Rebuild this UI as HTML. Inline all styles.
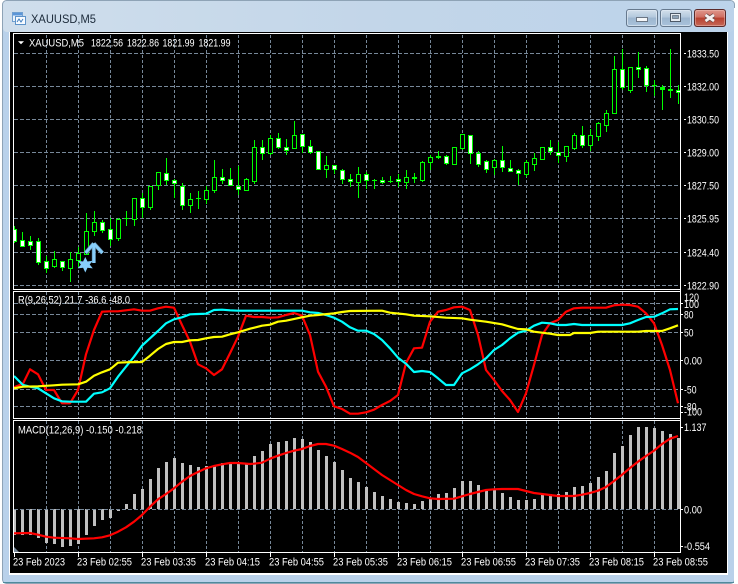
<!DOCTYPE html>
<html><head><meta charset="utf-8"><title>XAUUSD,M5</title>
<style>
html,body{margin:0;padding:0;background:#fff;width:738px;height:584px;overflow:hidden}
svg{display:block}
text{font-family:"Liberation Sans",sans-serif;fill:#fff;font-size:10.6px}
</style></head><body>
<svg width="738" height="584" viewBox="0 0 738 584" xmlns="http://www.w3.org/2000/svg">
<defs>
<linearGradient id="tb" x1="0" y1="0" x2="1" y2="0"><stop offset="0" stop-color="#cfdeec"/><stop offset=".5" stop-color="#c3d6e9"/><stop offset="1" stop-color="#bcd3ea"/></linearGradient>
<linearGradient id="bt" x1="0" y1="0" x2="0" y2="1"><stop offset="0" stop-color="#d5e1ed"/><stop offset=".45" stop-color="#b3c8dc"/><stop offset=".5" stop-color="#9db6cf"/><stop offset="1" stop-color="#a9c3dc"/></linearGradient>
<linearGradient id="cl" x1="0" y1="0" x2="0" y2="1"><stop offset="0" stop-color="#e0998e"/><stop offset=".45" stop-color="#cf6f62"/><stop offset=".5" stop-color="#b8402f"/><stop offset="1" stop-color="#c66a58"/></linearGradient>
<clipPath id="m"><rect x="14" y="35" width="666" height="254"/></clipPath>
<clipPath id="r"><rect x="14" y="292" width="666" height="126"/></clipPath>
<clipPath id="c"><rect x="14" y="421" width="666" height="131"/></clipPath>
</defs>

<!-- window frame -->
<rect x="2.500" y="0.500" width="732" height="583" rx="4" fill="#b9d1ea" stroke="#8ea3b6"/>
<rect x="3" y="1" width="731" height="31" rx="4" fill="url(#tb)"/>
<rect x="734" y="8" width="4" height="576" fill="#fff"/>
<rect x="3" y="582" width="731" height="1" fill="#4f8a9c"/>

<!-- title icon -->
<rect x="12.500" y="12.500" width="10" height="9" fill="#eaf3fb" stroke="#6f9fd0"/>
<rect x="13" y="13" width="9" height="2.500" fill="#5b96d8"/>
<rect x="15.500" y="16.500" width="10" height="8" fill="#f7fbff" stroke="#5d93c9"/>
<path d="M17 22l2-3 2 3 2-3" fill="none" stroke="#3f7fc0"/>
<text x="31" y="23" style="font-size:11.6px;fill:#1b2a3a" textLength="65" lengthAdjust="spacingAndGlyphs">XAUUSD,M5</text>

<!-- buttons -->
<rect x="626.500" y="9.500" width="31" height="17" rx="2.500" fill="url(#bt)" stroke="#66798e"/>
<rect x="627.500" y="10.500" width="29" height="15" rx="2" fill="none" stroke="#dfe9f3" stroke-opacity=".7"/>
<rect x="636.500" y="17.500" width="11" height="4" fill="#f5f7f9" stroke="#6b7684"/>
<rect x="660.500" y="9.500" width="31" height="17" rx="2.500" fill="url(#bt)" stroke="#66798e"/>
<rect x="661.500" y="10.500" width="29" height="15" rx="2" fill="none" stroke="#dfe9f3" stroke-opacity=".7"/>
<rect x="670.500" y="13.500" width="10" height="8" fill="#e6ecf2" stroke="#4e5a68"/>
<rect x="672.500" y="15.500" width="6" height="3" fill="#8fa3b7" stroke="#4e5a68" stroke-width=".6"/>
<rect x="694.500" y="9.500" width="31" height="17" rx="2.500" fill="url(#cl)" stroke="#5b2a2a"/>
<rect x="695.500" y="10.500" width="29" height="15" rx="2" fill="none" stroke="#eec0b8" stroke-opacity=".5"/>
<path d="M705.500 15l8.500 6M714 15l-8.500 6" stroke="#6d4a48" stroke-width="4.400" fill="none"/>
<path d="M705.500 15l8.500 6M714 15l-8.500 6" stroke="#f4f1f0" stroke-width="2.800" fill="none"/>

<!-- chart bg -->
<rect x="9" y="32" width="719" height="543" fill="#fff"/>
<rect x="10" y="32" width="717" height="541" fill="#000"/>

<!-- grid -->
<g shape-rendering="crispEdges" stroke="#778899" fill="none">
<path stroke-dasharray="4 2" d="M14 53.500H680M14 86.500H680M14 119.500H680M14 152.500H680M14 185.500H680M14 218.500H680M14 252.500H680M14 285.500H680M14 303.500H680M14 314.500H680M14 332.500H680M14 360.500H680M14 389.500H680M14 406.500H680"/>
<path stroke-dasharray="3 2" d="M46.500 35V289M78.500 35V289M110.500 35V289M142.500 35V289M174.500 35V289M206.500 35V289M238.500 35V289M270.500 35V289M302.500 35V289M334.500 35V289M366.500 35V289M398.500 35V289M430.500 35V289M462.500 35V289M494.500 35V289M526.500 35V289M558.500 35V289M590.500 35V289M622.500 35V289M654.500 35V289"/>
<path stroke-dasharray="3 2" d="M46.500 292V418M78.500 292V418M110.500 292V418M142.500 292V418M174.500 292V418M206.500 292V418M238.500 292V418M270.500 292V418M302.500 292V418M334.500 292V418M366.500 292V418M398.500 292V418M430.500 292V418M462.500 292V418M494.500 292V418M526.500 292V418M558.500 292V418M590.500 292V418M622.500 292V418M654.500 292V418"/>
<path stroke-dasharray="3 2" d="M46.500 421V552M78.500 421V552M110.500 421V552M142.500 421V552M174.500 421V552M206.500 421V552M238.500 421V552M270.500 421V552M302.500 421V552M334.500 421V552M366.500 421V552M398.500 421V552M430.500 421V552M462.500 421V552M494.500 421V552M526.500 421V552M558.500 421V552M590.500 421V552M622.500 421V552M654.500 421V552"/>
</g>

<!-- candles -->
<g clip-path="url(#m)" shape-rendering="crispEdges">
<path fill="none" stroke="#0f0" d="M14.500 226V243M22.500 232V246M30.500 236V250M38.500 238V265M46.500 256V273M54.500 251V268M62.500 261V271M70.500 252V282M78.500 247V267M86.500 213V254M94.500 211V236M102.500 220V233M110.500 218V246M118.500 218V241M126.500 211V226M134.500 198V226M142.500 193V218M150.500 186V210M158.500 172V190M166.500 158V185M174.500 179V198M182.500 183V210M190.500 193V213M198.500 191V209M206.500 186V204M214.500 160V193M222.500 169V184M230.500 168V186M238.500 166V195M246.500 178V191M254.500 140V184M262.500 140V160M270.500 135V155M278.500 133V149M286.500 139V155M294.500 121V148M302.500 134V153M310.500 140V154M318.500 151V169M326.500 156V178M334.500 165V174M342.500 169V184M350.500 174V187M358.500 167V198M366.500 172V189M374.500 179V189M382.500 177V184M390.500 176V183M398.500 174V187M406.500 170V189M414.500 173V183M422.500 161V182M430.500 155V170M438.500 151V159M446.500 155V165M454.500 147V164M462.500 134V150M470.500 135V164M478.500 151V167M486.500 160V173M494.500 159V175M502.500 146V172M510.500 160V172M518.500 169V185M526.500 160V177M534.500 153V171M542.500 147V160M550.500 140V155M558.500 142V163M566.500 146V162M574.500 133V150M582.500 126V148M590.500 129V151M598.500 122V141M606.500 110V132M614.500 56V113M622.500 49V90M630.500 67V93M638.500 52V78M646.500 66V92M654.500 80V96M662.500 85V110M670.500 49V98M678.500 85V104M124 218.500h5M196 198.500h5M372 180.500h5M388 181.500h5M652 85.500h5"/>
<path fill="#0f0" d="M412 177h5v2h-5zM436 156h5v2h-5zM660 87h5v3h-5zM668 89h5v2h-5z"/>
<path fill="#000" stroke="#0f0" d="M52.500 259.500h4v7h-4zM68.500 259.500h4v9h-4zM76.500 253.500h4v7h-4zM84.500 231.500h4v23h-4zM92.500 222.500h4v9h-4zM116.500 219.500h4v19h-4zM132.500 198.500h4v21h-4zM148.500 186.500h4v21h-4zM156.500 172.500h4v13h-4zM188.500 199.500h4v6h-4zM204.500 190.500h4v9h-4zM212.500 177.500h4v13h-4zM244.500 179.500h4v11h-4zM252.500 147.500h4v34h-4zM268.500 138.500h4v15h-4zM292.500 135.500h4v13h-4zM324.500 165.500h4v4h-4zM356.500 174.500h4v8h-4zM404.500 177.500h4v5h-4zM420.500 162.500h4v18h-4zM428.500 157.500h4v5h-4zM452.500 147.500h4v17h-4zM460.500 134.500h4v14h-4zM492.500 160.500h4v7h-4zM524.500 162.500h4v12h-4zM532.500 158.500h4v6h-4zM540.500 147.500h4v12h-4zM564.500 146.500h4v10h-4zM572.500 135.500h4v13h-4zM588.500 135.500h4v10h-4zM596.500 123.500h4v13h-4zM604.500 113.500h4v12h-4zM612.500 69.500h4v44h-4zM628.500 67.500h4v23h-4z"/>
<path fill="#fff" stroke="#0f0" d="M12.500 229.500h4v12h-4zM20.500 240.500h4v6h-4zM28.500 241.500h4v4h-4zM36.500 241.500h4v21h-4zM44.500 261.500h4v7h-4zM60.500 261.500h4v6h-4zM100.500 222.500h4v8h-4zM108.500 229.500h4v10h-4zM140.500 198.500h4v9h-4zM164.500 173.500h4v7h-4zM172.500 180.500h4v3h-4zM180.500 186.500h4v19h-4zM220.500 177.500h4v3h-4zM228.500 179.500h4v6h-4zM236.500 186.500h4v3h-4zM260.500 147.500h4v6h-4zM276.500 138.500h4v9h-4zM284.500 147.500h4v3h-4zM300.500 134.500h4v12h-4zM308.500 146.500h4v6h-4zM316.500 151.500h4v18h-4zM332.500 165.500h4v4h-4zM340.500 170.500h4v9h-4zM348.500 179.500h4v2h-4zM364.500 174.500h4v6h-4zM380.500 180.500h4v2h-4zM396.500 179.500h4v2h-4zM444.500 156.500h4v7h-4zM468.500 135.500h4v18h-4zM476.500 153.500h4v11h-4zM484.500 161.500h4v8h-4zM500.500 160.500h4v7h-4zM508.500 168.500h4v3h-4zM516.500 170.500h4v3h-4zM548.500 147.500h4v4h-4zM556.500 152.500h4v3h-4zM580.500 135.500h4v10h-4zM620.500 69.500h4v18h-4zM636.500 67.500h4v2h-4zM644.500 68.500h4v17h-4zM676.500 90.500h4v2h-4z"/>
</g>

<!-- arrow and star -->
<path d="M93.800 243.500 85.500 253M93.800 243.500 102.500 253M93.800 244V263" fill="none" stroke="#5f87a3" stroke-width="4"/>
<path d="M93.800 243.500 85.500 253M93.800 243.500 102.500 253M93.800 244V263" fill="none" stroke="#87cefa" stroke-width="2.800"/>
<path d="M85.300 257l2.200 4.500 5.300-.7-3.100 3.700 3.100 3.900-5.300-.7-2.200 4.800-2.200-4.800-5.300.7 3.100-3.900-3.100-3.700 5.300.7z" fill="#87cefa"/>

<!-- panel lines -->
<g clip-path="url(#r)" fill="none" stroke-width="2.200" stroke-linejoin="round">
<polyline stroke="#f00" points="14,387.300 23,383.700 30,369.300 38,374.300 46,390 54,390 62,403.300 70,403.300 78,390 86,354.300 94,330 102,311.700 110,311.300 118,311.300 126,310.300 134,309.300 142,310.700 150,310.700 158,308.300 166,306.700 174,307.700 182,325 190,341.700 198,364.300 206,368.300 214,375 222,369.300 230,353.300 238,336.700 246,315.700 254,317 262,317 270,317.700 278,317.300 286,315 294,313 302,315.700 310,335 318,371.700 326,386.700 334,406.300 342,409 350,413.700 358,413.700 366,412.300 374,409.700 382,405 390,401 398,395 406,363 414,348.300 422,347.700 430,321.700 438,311.700 446,310 454,307.300 462,306.700 470,310 478,335 486,370 494,380 502,391 510,400 518,412 526,393.300 534,365 542,335 550,323.300 558,320 566,311.700 574,308.300 582,307.700 590,307.700 598,307.700 606,307.700 614,305.300 622,304.700 630,305 638,306.700 646,313.300 654,323.300 662,345 670,370 678,403.300"/>
<polyline stroke="#0ff" points="14,376 23,385 30,386.700 38,388.300 46,393.300 54,398.300 62,401.300 70,401.700 78,401.700 86,401.700 94,393.700 102,392.300 110,388.300 118,376.700 126,366.700 134,356.700 142,345.700 150,338.300 158,331 166,323.300 174,319.300 182,317.300 190,314.300 198,314 206,313.700 214,310 222,309.700 230,310.300 238,310.700 246,310.700 254,310.700 302,310.700 310,312.300 318,313 326,315 334,317.700 342,321.700 350,327.300 358,330.700 366,330.700 374,334 382,340 390,348.300 398,357.700 406,363.700 414,372 422,371 430,372 438,378.300 446,385 454,385 462,373.300 470,369.300 478,364.300 486,358.300 494,350 502,345 510,338.300 518,332.700 526,330.700 534,325.700 542,322.700 550,323.300 558,325 566,325 574,324 582,325 590,325 622,325 630,323.300 638,320 646,317 654,316.700 662,313.300 670,309.300 678,309"/>
<polyline stroke="#ff0" points="14,388.300 23,386.700 38,386.300 54,385.300 62,384.700 78,384.300 86,381.700 94,375.700 102,372.300 110,369.300 118,362.700 126,362.300 142,362 150,355.700 158,349 166,344 174,342 182,342 190,340.300 198,340 206,338.300 214,337 222,336.700 230,334.300 238,332.300 250,328.700 262,325.700 270,324.700 278,321.700 286,320.700 302,317.300 310,315.700 318,315 334,313.300 342,312 350,311 382,310.700 390,312.700 406,314.300 414,315.700 430,316.300 446,317.700 462,318.300 470,319.700 486,321.700 502,324.300 510,326.700 518,329 526,329.300 534,331.700 542,332.700 550,333.700 558,335 570,335 574,333 590,333 598,331.700 638,331.700 646,331 662,331 670,328.300 678,325.300"/>
</g>

<!-- MACD -->
<g clip-path="url(#c)">
<path fill="none" stroke="#c0c0c0" stroke-width="3" shape-rendering="crispEdges" d="M14.500 509V535M22.500 509V535M30.500 509V535M38.500 509V538M46.500 509V543M54.500 509V544M62.500 509V547M70.500 509V546M78.500 509V544M86.500 509V535M94.500 509V526M102.500 509V520M110.500 509V518M118.500 509V511M126.500 509V504M134.500 509V494M142.500 509V489M150.500 509V479M158.500 509V468M166.500 509V462M174.500 509V458M182.500 509V463M190.500 509V465M198.500 509V467M206.500 509V466M214.500 509V466M222.500 509V463M230.500 509V462M238.500 509V464M246.500 509V464M254.500 509V456M262.500 509V451M270.500 509V444M278.500 509V442M286.500 509V441M294.500 509V438M302.500 509V439M310.500 509V442M318.500 509V450M326.500 509V456M334.500 509V462M342.500 509V470M350.500 509V478M358.500 509V482M366.500 509V487M374.500 509V492M382.500 509V496M390.500 509V499M398.500 509V502M406.500 509V503M414.500 509V504M422.500 509V501M430.500 509V498M438.500 509V494M446.500 509V493M454.500 509V488M462.500 509V481M470.500 509V481M478.500 509V485M486.500 509V489M494.500 509V490M502.500 509V493M510.500 509V497M518.500 509V500M526.500 509V500M534.500 509V499M542.500 509V495M550.500 509V494M558.500 509V494M566.500 509V492M574.500 509V487M582.500 509V486M590.500 509V483M598.500 509V477M606.500 509V471M614.500 509V453M622.500 509V446M630.500 509V435M638.500 509V427M646.500 509V427M654.500 509V428M662.500 509V431M670.500 509V434M678.500 509V438"/>
<path d="M14 509.500H680" stroke="#778899" stroke-dasharray="4 2" shape-rendering="crispEdges" fill="none"/>
<polyline fill="none" stroke="#f00" stroke-width="2.200" stroke-linejoin="round" points="14,533.300 30,533 38,534.700 46,536.700 54,537.700 70,538.300 78,539 94,538.300 102,537.300 110,535.300 118,531.700 126,527.300 134,521.700 142,515 150,506.700 158,499.300 166,494 174,488.300 182,481.700 190,476 198,472 206,468.300 214,466 222,464.300 230,463 238,463 250,464 254,463.700 262,462.700 270,458.700 278,455.700 286,453 294,450.700 302,449 310,446 318,444 326,444 334,445.700 342,449 350,452.700 358,457 366,463 374,469 382,475 390,480 398,485 406,490 414,494 422,496.300 430,498.300 438,499 454,498.700 462,496.300 470,494 478,492 486,490 494,489.300 502,489 518,489 526,491 534,493 542,494 550,495 558,496 574,496 582,494.700 590,493 598,490.700 606,487 614,481 622,474.700 630,468 638,461.700 646,456 654,450.700 662,444 670,438.700 678,436"/>
<path d="M14 547l5 5h-5z" fill="#778899"/>
</g>

<!-- panel borders -->
<g fill="none" stroke="#fff" shape-rendering="crispEdges">
<path d="M13.500 34V289.500M13.500 291V418.500M13.500 420V552.500M680.500 34V552.500M13 33.500H681M13 289.500H681M13 291.500H681M13 418.500H681M13 420.500H681M13 552.500H681"/>
<path d="M684 53.500h2M684 86.500h2M684 119.500h2M684 152.500h2M684 185.500h2M684 218.500h2M684 252.500h2M684 285.500h2M681 303.500h2M681 314.500h2M681 332.500h2M681 360.500h2M681 389.500h2M681 406.500h2M681 412.500h2M681 427.500h2M681 509.500h2M681 546.500h2M14.500 552V557M78.500 552V557M142.500 552V557M206.500 552V557M270.500 552V557M334.500 552V557M398.500 552V557M462.500 552V557M526.500 552V557M590.500 552V557M654.500 552V557"/>
</g>

<!-- header texts -->
<path d="M18 41.300h6l-3 3z" fill="#fff"/>
<text x="29" y="46.500" textLength="55" lengthAdjust="spacingAndGlyphs">XAUUSD,M5</text>
<text x="91" y="46.500" textLength="32" lengthAdjust="spacingAndGlyphs">1822.56</text>
<text x="127" y="46.500" textLength="32" lengthAdjust="spacingAndGlyphs">1822.86</text>
<text x="162.500" y="46.500" textLength="32" lengthAdjust="spacingAndGlyphs">1821.99</text>
<text x="198.500" y="46.500" textLength="32" lengthAdjust="spacingAndGlyphs">1821.99</text>
<text x="18" y="303.500" textLength="112" lengthAdjust="spacingAndGlyphs">R(9,26,52) 21.7 -36.6 -48.0</text>
<text x="18" y="433.500" textLength="124" lengthAdjust="spacingAndGlyphs">MACD(12,26,9) -0.150 -0.218</text>

<!-- axis labels -->
<g>
<text x="687" y="57.500" textLength="32" lengthAdjust="spacingAndGlyphs">1833.50</text>
<text x="687" y="90.500" textLength="32" lengthAdjust="spacingAndGlyphs">1832.00</text>
<text x="687" y="123.500" textLength="32" lengthAdjust="spacingAndGlyphs">1830.50</text>
<text x="687" y="156.500" textLength="32" lengthAdjust="spacingAndGlyphs">1829.00</text>
<text x="687" y="189.500" textLength="32" lengthAdjust="spacingAndGlyphs">1827.50</text>
<text x="687" y="222.500" textLength="32" lengthAdjust="spacingAndGlyphs">1825.95</text>
<text x="687" y="256.500" textLength="32" lengthAdjust="spacingAndGlyphs">1824.40</text>
<text x="687" y="289.500" textLength="32" lengthAdjust="spacingAndGlyphs">1822.90</text>
<text x="684" y="301" textLength="15" lengthAdjust="spacingAndGlyphs">120</text>
<text x="684" y="308" textLength="15" lengthAdjust="spacingAndGlyphs">100</text>
<text x="684" y="318.500" textLength="9.500" lengthAdjust="spacingAndGlyphs">80</text>
<text x="684" y="336.500" textLength="9.500" lengthAdjust="spacingAndGlyphs">50</text>
<text x="684" y="364.500" textLength="18" lengthAdjust="spacingAndGlyphs">0.00</text>
<text x="684" y="393.500" textLength="12.500" lengthAdjust="spacingAndGlyphs">-50</text>
<text x="684" y="410.500" textLength="12.500" lengthAdjust="spacingAndGlyphs">-80</text>
<text x="684" y="415.500" textLength="18" lengthAdjust="spacingAndGlyphs">-100</text>
<text x="684" y="431" textLength="22.500" lengthAdjust="spacingAndGlyphs">1.137</text>
<text x="684" y="513.500" textLength="18" lengthAdjust="spacingAndGlyphs">0.00</text>
<text x="684" y="550" textLength="26" lengthAdjust="spacingAndGlyphs">-0.554</text>
<text x="13" y="565.500" textLength="52" lengthAdjust="spacingAndGlyphs">23 Feb 2023</text>
<text x="77" y="565.500" textLength="55" lengthAdjust="spacingAndGlyphs">23 Feb 02:55</text>
<text x="141" y="565.500" textLength="55" lengthAdjust="spacingAndGlyphs">23 Feb 03:35</text>
<text x="205" y="565.500" textLength="55" lengthAdjust="spacingAndGlyphs">23 Feb 04:15</text>
<text x="269" y="565.500" textLength="55" lengthAdjust="spacingAndGlyphs">23 Feb 04:55</text>
<text x="333" y="565.500" textLength="55" lengthAdjust="spacingAndGlyphs">23 Feb 05:35</text>
<text x="397" y="565.500" textLength="55" lengthAdjust="spacingAndGlyphs">23 Feb 06:15</text>
<text x="461" y="565.500" textLength="55" lengthAdjust="spacingAndGlyphs">23 Feb 06:55</text>
<text x="525" y="565.500" textLength="55" lengthAdjust="spacingAndGlyphs">23 Feb 07:35</text>
<text x="589" y="565.500" textLength="55" lengthAdjust="spacingAndGlyphs">23 Feb 08:15</text>
<text x="653" y="565.500" textLength="55" lengthAdjust="spacingAndGlyphs">23 Feb 08:55</text>
</g>
</svg>
</body></html>
